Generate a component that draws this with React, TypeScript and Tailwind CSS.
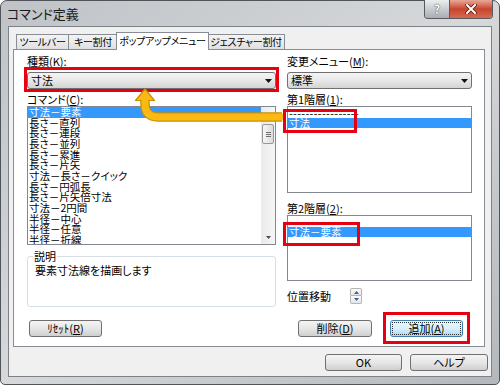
import React from "react";

const U = ({ children }: { children: React.ReactNode }) => (
  <span className="underline underline-offset-[1px] decoration-[1px]">{children}</span>
);

function Label({ children, className = "" }: { children: React.ReactNode; className?: string }) {
  return <div className={"h-[14px] leading-[14px] text-[11px] whitespace-nowrap " + className}>{children}</div>;
}

function Combo({ value }: { value: string }) {
  return (
    <div className="mt-[4px] h-[17px] flex items-center rounded-[3px] border border-[#707070] bg-linear-to-b from-[#f4f4f4] via-[#e8e8e8] to-[#d3d3d3] pl-[3px] pr-[3px]">
      <span className="flex-1 text-[11px] leading-[15px]">{value}</span>
      <svg width="7" height="4" viewBox="0 0 7 4">
        <path d="M0 0H7L3.5 4Z" fill="#111" />
      </svg>
    </div>
  );
}

function Row({ text, sel = false }: { text: string; sel?: boolean }) {
  return (
    <div
      className={
        "h-[10.67px] leading-[10.67px] text-[10.5px] pl-[1px] whitespace-nowrap " +
        (sel ? "bg-[#3399ff] text-white" : "")
      }
    >
      {text}
    </div>
  );
}

function Tab({ children, w, sel = false }: { children: React.ReactNode; w: string; sel?: boolean }) {
  return (
    <div
      className={
        "border border-b-0 border-[#898c95] flex items-center justify-center whitespace-nowrap text-[10px] tracking-[-0.3px] leading-[12px] " +
        w +
        " " +
        (sel
          ? "relative z-10 -ml-[2px] -mb-px h-[18px] bg-white pb-[1px]"
          : "h-[15px] bg-linear-to-b from-[#f4f4f4] to-[#e0e0e0]")
      }
    >
      {children}
    </div>
  );
}

function Btn({ children, w, def = false, className = "" }: { children: React.ReactNode; w: string; def?: boolean; className?: string }) {
  return (
    <div
      className={
        "h-[17px] rounded-[3px] border flex items-center justify-center text-[11px] leading-[13px] whitespace-nowrap " +
        w +
        " " +
        (def
          ? "border-[#3c7fb1] bg-linear-to-b from-[#eaf6fd] via-[#d9f0fc] to-[#a7d9f5] p-[1px]"
          : "border-[#707070] bg-linear-to-b from-[#f4f4f4] via-[#e6e6e6] to-[#cfcfcf]") +
        " " +
        className
      }
    >
      {def ? (
        <div className="w-full h-full border border-dotted border-[#333] flex items-center justify-center">{children}</div>
      ) : (
        children
      )}
    </div>
  );
}

const leftItems = [
  "寸法－要素",
  "長さ－直列",
  "長さ－連段",
  "長さ－並列",
  "長さ－累進",
  "長さ－片矢",
  "寸法－長さ－クイック",
  "長さ－円弧長",
  "長さ－片矢倍寸法",
  "寸法－2円間",
  "半径－中心",
  "半径－任意",
  "半径－折線",
];

export default function App() {
  return (
    <div className="relative w-[500px] h-[385px] overflow-hidden bg-white font-['Noto_Sans_CJK_JP',sans-serif] [font-feature-settings:'palt'] text-black">
      <div className="w-full h-full flex flex-col rounded-t-[7px] rounded-b-[5px] border border-[#4f5458] bg-linear-to-br from-[#bfc3c7] via-[#d6d8da] to-[#b4b8bc]">
        {/* title bar */}
        <div className="h-[25px] flex items-start">
          <span className="pl-[6px] pt-[5px] text-[13px] leading-[16px] text-[#1a1a1a]">コマンド定義</span>
          <div className="ml-auto mr-[6px] -mt-px flex rounded-b-[4px] overflow-hidden border border-t-0 border-[#575b5f]">
            <div className="w-[25px] h-[18px] flex items-center justify-center bg-linear-to-b from-[#eceef0] via-[#c9cdd1] to-[#a9adb2] border-r border-[#575b5f] text-[12px] font-bold text-white [text-shadow:0_0_1px_#444,0_0_1px_#444]">
              ?
            </div>
            <div className="w-[42px] h-[18px] flex items-center justify-center bg-linear-to-b from-[#e9a799] via-[#c8432c] to-[#d46a52]">
              <svg width="12" height="10" viewBox="0 0 12 10">
                <path d="M2 1L10 9M10 1L2 9" stroke="#5a1a10" strokeWidth="3.6" strokeLinecap="square" />
                <path d="M2 1L10 9M10 1L2 9" stroke="#fff" strokeWidth="2" strokeLinecap="square" />
              </svg>
            </div>
          </div>
        </div>

        {/* client */}
        <div className="mx-[7px] mb-[7px] flex-1 border border-[#7c8288] bg-[#f0f0f0] flex flex-col pt-[5px]">
          {/* tabs */}
          <div className="h-[17px] flex items-end pl-[7px]">
            <Tab w="w-[53px]">ツールバー</Tab>
            <Tab w="w-[50px] -ml-px">キー割付</Tab>
            <Tab w="w-[93px]" sel>
              ポップアップメニュー
            </Tab>
            <Tab w="w-[78px] -ml-[2px]">ジェスチャー割付</Tab>
          </div>

          {/* panel */}
          <div className="ml-[4px] w-[472px] h-[298px] border border-[#898c95] bg-white pt-[4px] flex flex-col">
            <div className="flex pl-[13px] gap-[11px]">
              {/* left column */}
              <div className="w-[249px] flex flex-col">
                <Label>種類(<U>K</U>):</Label>
                <Combo value="寸法" />
                <Label className="mt-[3px]">
                  コマンド(<U>C</U>):
                </Label>
                <div className="h-[139px] border border-[#828790] flex overflow-hidden">
                  <div className="flex-1 overflow-hidden">
                    {leftItems.map((t, i) => (
                      <Row key={t} text={t} sel={i === 0} />
                    ))}
                  </div>
                  <div className="w-[14px] flex flex-col bg-linear-to-r from-[#eaeaea] to-[#f6f6f6]">
                    <div className="h-[16px] flex items-center justify-center">
                      <svg width="5" height="3" viewBox="0 0 5 3">
                        <path d="M0 3H5L2.5 0Z" fill="#c4c4c4" />
                      </svg>
                    </div>
                    <div className="flex-1">
                      <div className="mt-[1px] mx-[1px] h-[20px] rounded-[2px] border border-[#979797] bg-linear-to-r from-[#f6f6f6] to-[#dcdcdc] flex flex-col items-center justify-center gap-[1px]">
                        <div className="w-[5px] h-px bg-[#707070]" />
                        <div className="w-[5px] h-px bg-[#707070]" />
                        <div className="w-[5px] h-px bg-[#707070]" />
                      </div>
                    </div>
                    <div className="h-[14px] flex items-center justify-center">
                      <svg width="5" height="3" viewBox="0 0 5 3">
                        <path d="M0 0H5L2.5 3Z" fill="#4d4d4d" />
                      </svg>
                    </div>
                  </div>
                </div>
                <fieldset className="mt-[4px] h-[58px] border border-[#d5dfe5] rounded-[3px] pl-[5px]">
                  <legend className="px-[1px] text-[11px] leading-[14px]">説明</legend>
                  <div className="pl-[2px] text-[11px] leading-[14px]">要素寸法線を描画します</div>
                </fieldset>
              </div>

              {/* right column */}
              <div className="w-[185px] flex flex-col">
                <Label>
                  変更メニュー(<U>M</U>):
                </Label>
                <Combo value="標準" />
                <Label className="mt-[3px]">
                  第1階層(<U>1</U>):
                </Label>
                <div className="h-[87px] border border-[#828790] overflow-hidden">
                  <div className="h-[10.67px] leading-[12px] text-[11px] pl-[1px] tracking-[0.3px] whitespace-nowrap">
                    -----------------
                  </div>
                  <Row text="寸法" sel />
                </div>
                <Label className="mt-[8px]">
                  第2階層(<U>2</U>):
                </Label>
                <div className="h-[66px] border border-[#828790] overflow-hidden">
                  <div className="h-[10.67px]" />
                  <Row text="寸法－要素" sel />
                </div>
                <div className="mt-[7px] h-[16px] flex items-center">
                  <div className="w-[63px] text-[11px] leading-[14px]">位置移動</div>
                  <div className="flex flex-col">
                    <div className="w-[12px] h-[8px] border border-[#b4b4b4] rounded-t-[2px] bg-linear-to-b from-[#fbfbfb] to-[#e6e6e6] flex items-center justify-center">
                      <svg width="5" height="3" viewBox="0 0 5 3">
                        <path d="M0 3H5L2.5 0Z" fill="#3d5f9a" />
                      </svg>
                    </div>
                    <div className="w-[12px] h-[8px] border border-t-0 border-[#b4b4b4] rounded-b-[2px] bg-linear-to-b from-[#fbfbfb] to-[#e6e6e6] flex items-center justify-center">
                      <svg width="5" height="3" viewBox="0 0 5 3">
                        <path d="M0 0H5L2.5 3Z" fill="#3d5f9a" />
                      </svg>
                    </div>
                  </div>
                </div>
              </div>
            </div>

            {/* panel buttons */}
            <div className="mt-[13px] flex pl-[15px]">
              <Btn w="w-[73px]">
                ﾘｾｯﾄ(<U>R</U>)
              </Btn>
              <Btn w="w-[74px]" className="ml-[196px]">
                削除(<U>D</U>)
              </Btn>
              <Btn w="w-[73px]" def className="ml-[18px]">
                追加(<U>A</U>)
              </Btn>
            </div>
          </div>

          {/* dialog buttons */}
          <div className="mt-[7px] flex justify-end pr-[3px] gap-[8px]">
            <Btn w="w-[77px]">OK</Btn>
            <Btn w="w-[78px]">ヘルプ</Btn>
          </div>
        </div>
      </div>

      {/* annotations */}
      <div className="absolute left-[24px] top-[67px] w-[255px] h-[25px] border-[3px] border-[#e60012]" />
      <div className="absolute left-[283px] top-[109px] w-[74px] h-[24px] border-[3px] border-[#e60012]" />
      <div className="absolute left-[283px] top-[222px] w-[77px] h-[24px] border-[3px] border-[#e60012]" />
      <div className="absolute left-[383px] top-[312px] w-[87px] h-[32px] border-[3px] border-[#e60012]" />
      <svg className="absolute left-0 top-0 pointer-events-none" width="500" height="385" viewBox="0 0 500 385">
        <path d="M282 117H158Q145 117 145 104V99" fill="none" stroke="#c98f00" strokeWidth="9.5" />
        <path d="M145 89L135.5 100.5H154.5Z" fill="#fdb913" stroke="#c98f00" strokeWidth="1.2" strokeLinejoin="round" />
        <path d="M283 117H158Q145 117 145 104V100" fill="none" stroke="#fdb913" strokeWidth="7" />
      </svg>
    </div>
  );
}
